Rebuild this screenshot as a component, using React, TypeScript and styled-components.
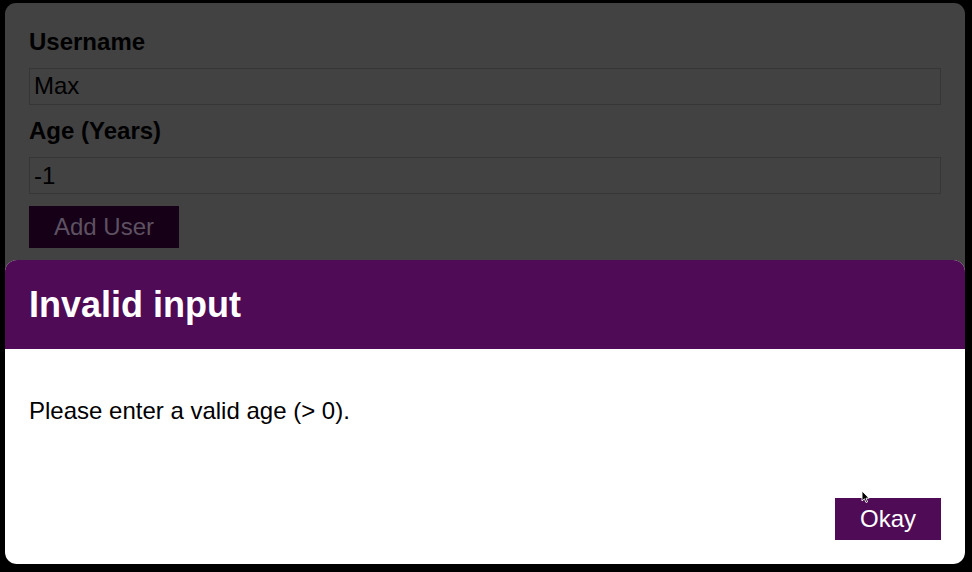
import React from "react";
import styled, { createGlobalStyle } from "styled-components";

const Global = createGlobalStyle`
  html, body {
    margin: 0;
    padding: 0;
    background: #000;
  }
  body {
    font-family: "Liberation Sans", Arial, Helvetica, sans-serif;
    font-size: 24px;
  }
  * { box-sizing: border-box; }
`;

const Stage = styled.div`
  width: 972px;
  height: 572px;
  padding: 3px 7px 8px 5px;
`;

const Window = styled.div`
  position: relative;
  width: 960px;
  height: 561px;
  border-radius: 11px;
  overflow: hidden;
  background: #424242;
`;

const Card = styled.form`
  padding: 25px 24px 24px 24px;
  display: flex;
  flex-direction: column;
`;

const Label = styled.label`
  display: block;
  font-weight: bold;
  color: #000;
  margin-bottom: 12px;
  line-height: 27.6px;
`;

const Input = styled.input`
  font: inherit;
  display: block;
  width: 100%;
  border: 1px solid #363636;
  background: transparent;
  color: #000;
  padding: 3.6px 4px;
  margin: 0 0 12px 0;
  line-height: 27.6px;
  height: 37.6px;
  outline: none;
`;

const Button = styled.button<{ $dim?: boolean }>`
  font: inherit;
  line-height: 27.6px;
  border: 1px solid ${(p) => (p.$dim ? "#150018" : "#4f0b56")};
  background: ${(p) => (p.$dim ? "#150018" : "#4f0b56")};
  color: ${(p) => (p.$dim ? "#5e5262" : "#fff")};
  padding: 6px 24px;
  cursor: pointer;
  align-self: flex-start;
`;

const Modal = styled.div`
  position: absolute;
  left: 0;
  right: 0;
  top: 257px;
  background: #fff;
  border-radius: 12px;
  overflow: hidden;
  z-index: 10;
`;

const Header = styled.header`
  background: #4f0b56;
  padding: 24px;
`;

const Title = styled.h2`
  margin: 0;
  color: #fff;
  font-size: 36px;
  line-height: 41.4px;
  font-weight: bold;
`;

const Content = styled.div`
  padding: 24px 24px 25px;
`;

const Message = styled.p`
  margin: 24px 0;
  color: #000;
  line-height: 27.6px;
`;

const Actions = styled.footer`
  padding: 24px;
  display: flex;
  justify-content: flex-end;
`;

const Cursor = styled.svg`
  position: absolute;
  left: 856px;
  top: 487px;
  z-index: 20;
`;

export default function App() {
  return (
    <>
      <Global />
      <Stage>
        <Window>
          <Card onSubmit={(e) => e.preventDefault()}>
            <Label htmlFor="username">Username</Label>
            <Input id="username" type="text" defaultValue="Max" />
            <Label htmlFor="age">Age (Years)</Label>
            <Input id="age" type="number" defaultValue="-1" />
            <Button $dim type="submit">Add User</Button>
          </Card>
          <Modal>
            <Header>
              <Title>Invalid input</Title>
            </Header>
            <Content>
              <Message>Please enter a valid age (&gt; 0).</Message>
            </Content>
            <Actions>
              <Button type="button">Okay</Button>
            </Actions>
          </Modal>
          <Cursor width="9" height="14" viewBox="0 0 9 14">
            <path
              d="M1 1 L1 11 L3.4 8.8 L5 12.5 L6.6 11.8 L5 8.2 L8 8.2 Z"
              fill="#000"
              stroke="#fff"
              strokeWidth="0.9"
              strokeLinejoin="round"
            />
          </Cursor>
        </Window>
      </Stage>
    </>
  );
}
